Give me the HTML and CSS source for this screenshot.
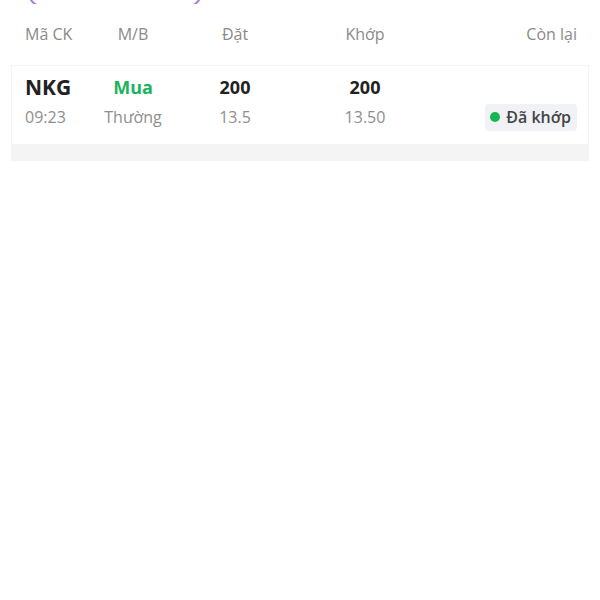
FILE: index.html
```html
<!DOCTYPE html>
<html>
<head>
  <meta charset="UTF-8">
  <title>Sổ lệnh</title>
  <link rel="stylesheet" href="styles.css">
</head>
<body>
  <div class="tabs">
    <div class="tab-pill"></div>
  </div>
  <div class="head">
    <span class="c1">Mã CK</span>
    <span class="c2">M/B</span>
    <span class="c3">Đặt</span>
    <span class="c4">Khớp</span>
    <span class="c5">Còn lại</span>
  </div>
  <div class="order-list">
    <div class="order">
      <div class="line">
        <span class="c1 symbol">NKG</span>
        <span class="c2 side buy">Mua</span>
        <span class="c3 qty">200</span>
        <span class="c4 qty">200</span>
        <span class="c5"></span>
      </div>
      <div class="line sub">
        <span class="c1">09:23</span>
        <span class="c2">Thường</span>
        <span class="c3">13.5</span>
        <span class="c4">13.50</span>
        <span class="c5"><span class="status"><i class="dot"></i>Đã khớp</span></span>
      </div>
    </div>
    <div class="list-end"></div>
  </div>
</body>
</html>
```

FILE: styles.css
```css
body {
  margin: 0;
  font-family: "Open Sans", "Noto Sans", sans-serif;
  background: #fff;
  color: #222;
}

.tabs {
  height: 4px;
  overflow: hidden;
  padding-left: 28px;
}

.tab-pill {
  width: 170px;
  height: 34px;
  margin-top: -31px;
  border: 2px solid #a77be0;
  border-radius: 14px;
}

.head,
.line {
  display: grid;
  grid-template-columns: 63px 90px 114px 146px 1fr;
  align-items: center;
}

.head {
  padding: 19px 23px 0 25px;
  height: 42px;
  align-items: start;
  font-size: 16px;
  color: #8a8a8a;
}

.c2,
.c3,
.c4 {
  text-align: center;
}

.c5 {
  text-align: right;
}

.order-list {
  margin: 0 11px;
}

.order {
  border: 1px solid #f4f4f4;
  border-bottom: none;
  padding: 6px 11px 12px 13px;
}

.line {
  height: 30px;
}

.symbol {
  font-size: 21px;
  font-weight: 700;
  color: #222;
}

.side {
  font-size: 18px;
  font-weight: 700;
}

.buy {
  color: #1bb35c;
}

.qty {
  font-size: 18px;
  font-weight: 700;
  color: #222;
}

.sub {
  font-size: 16px;
  color: #8e8e8e;
}

.status {
  display: inline-flex;
  align-items: center;
  gap: 6px;
  padding: 2px 6px 3px 5px;
  border-radius: 4px;
  background: #f1f2f6;
  color: #444;
  font-weight: 600;
}

.dot {
  width: 10px;
  height: 10px;
  border-radius: 50%;
  background: #16b556;
}

.list-end {
  height: 17px;
  background: #f4f4f4;
}
```
